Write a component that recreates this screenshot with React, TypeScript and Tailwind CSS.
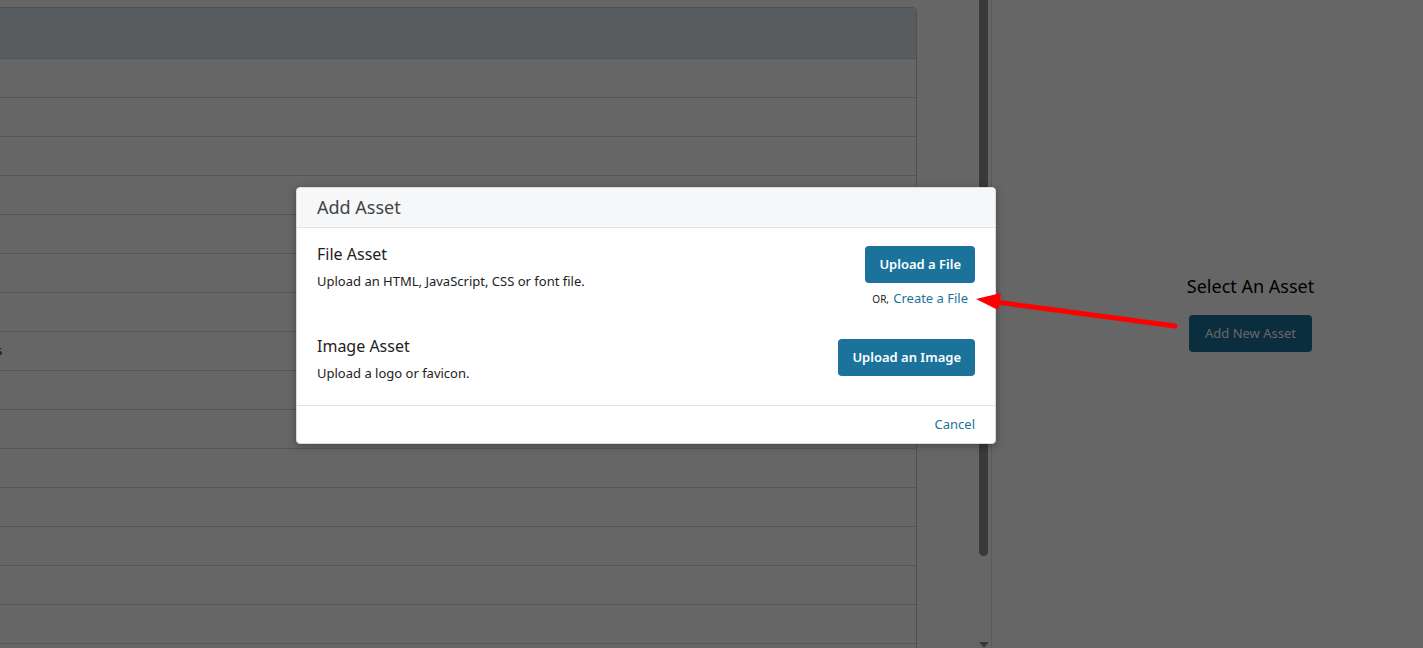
import React from "react";

const rows = Array.from({ length: 16 }, (_, i) => i);

function BackgroundPage() {
  return (
    <div className="flex h-[648px] w-[1423px] bg-white">
      <div className="w-[978px] overflow-hidden">
        <div className="mt-[7px] w-[917px] rounded-tr-[5px] border-r border-t border-[#c9c9c9]">
          <div className="h-[51px] rounded-tr-[5px] border-b border-[#cfcfcf] bg-[#dce5ec]" />
          {rows.map((i) => (
            <div key={i} className="flex h-[39px] items-center border-b border-[#d4d4d4] text-[13px] text-[#222]">
              {i === 7 ? <span className="-ml-[4px]">s</span> : null}
            </div>
          ))}
        </div>
      </div>

      <div className="relative w-[13px]">
        <div className="ml-px h-[556px] w-[9px] rounded-b-full bg-[#8e8e8e]" />
        <div className="absolute bottom-0 left-[1px] h-0 w-0 border-x-[5px] border-t-[6px] border-x-transparent border-t-[#8e8e8e]" />
      </div>
      <div className="w-px bg-[#e4e4e4]" />

      <div className="flex flex-1 flex-col items-center pl-[86px] pt-[275px]">
        <h2 className="text-[18px] leading-[22px] text-black">Select An Asset</h2>
        <button
          type="button"
          className="mt-[18px] h-[37px] rounded-[4px] bg-[#1a7399] px-[16px] text-[13px] text-white"
        >
          Add New Asset
        </button>
      </div>
    </div>
  );
}

function AddAssetModal() {
  return (
    <div className="absolute left-[296px] top-[187px] w-[700px] overflow-hidden rounded-[4px] border border-[#d8dbe2] bg-white shadow-[0_2px_8px_rgba(0,0,0,0.3)]">
      <div className="flex h-[40px] items-center border-b border-[#dde2ec] bg-[#f6f7f9] px-[20px]">
        <h1 className="-mt-px text-[18px] leading-[24px] text-[#444]">Add Asset</h1>
      </div>

      <div className="px-[20px] pb-[22px] pt-[15px]">
        <div className="flex items-start justify-between">
          <div>
            <div className="text-[16px] leading-[22px] text-[#222]">File Asset</div>
            <div className="mt-[6px] text-[13px] leading-[20px] text-[#222]">
              Upload an HTML, JavaScript, CSS or font file.
            </div>
          </div>
          <div className="mt-[3px] flex flex-col items-center">
            <button
              type="button"
              className="h-[37px] rounded-[4px] bg-[#1b739b] px-[14px] text-[13px] font-semibold text-white"
            >
              Upload a File
            </button>
            <div className="mt-[5px] leading-[18px]">
              <span className="text-[10px] text-[#222]">OR,</span>{" "}
              <span className="text-[13px] text-[#1b739b]">Create a File</span>
            </div>
          </div>
        </div>

        <div className="mt-[27px] flex items-start justify-between">
          <div>
            <div className="text-[16px] leading-[22px] text-[#222]">Image Asset</div>
            <div className="mt-[6px] text-[13px] leading-[20px] text-[#222]">Upload a logo or favicon.</div>
          </div>
          <button
            type="button"
            className="mt-[4px] h-[37px] rounded-[4px] bg-[#1b739b] px-[14px] text-[13px] font-semibold text-white"
          >
            Upload an Image
          </button>
        </div>
      </div>

      <div className="flex justify-end border-t border-[#dde2ec] px-[20px] py-[9px]">
        <span className="-mt-px text-[13px] leading-[20px] text-[#1b739b]">Cancel</span>
      </div>
    </div>
  );
}

export default function App() {
  return (
    <div className="relative h-[648px] w-[1423px] overflow-hidden font-['Noto_Sans',sans-serif]">
      <BackgroundPage />
      <div className="absolute inset-0 bg-black/60" />
      <AddAssetModal />
      <svg className="absolute left-0 top-0" width="1423" height="648" viewBox="0 0 1423 648">
        <line x1="996" y1="302" x2="1175" y2="326" stroke="#ff0000" strokeWidth="5" strokeLinecap="round" />
        <polygon points="976,299 1001,293 998,310" fill="#ff0000" />
      </svg>
    </div>
  );
}
